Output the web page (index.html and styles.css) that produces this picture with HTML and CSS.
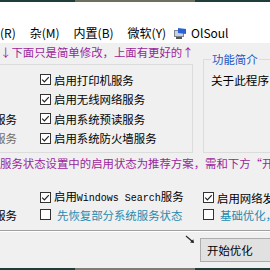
FILE: index.html
```html
<!DOCTYPE html>
<html lang="zh">
<head>
<meta charset="utf-8">
<link rel="stylesheet" href="styles.css">
</head>
<body>
<div class="win">
  <div class="strip"><span class="sa"></span><span class="sb"></span><span class="sc"></span></div>
  <div class="menubar">
    <span class="mi">(R)</span>
    <span class="mi">杂(M)</span>
    <span class="mi">内置(B)</span>
    <span class="mi">微软(Y)</span>
    <span class="mi brand">
      <svg class="micon" width="13" height="11" viewBox="0 0 13 11"><rect x="0" y="2" width="10" height="7" fill="#7d8590"/><rect x="1" y="3" width="8" height="5" fill="#c9d2de"/><polygon points="4,0 12,1 12,6 4,5" fill="#2a62d4"/><rect x="2" y="9" width="6" height="2" fill="#555"/></svg>
      <span>OlSoul</span>
    </span>
  </div>
  <div class="client">
    <div class="note">↓下面只是简单修改，上面有更好的↑</div>
    <div class="top">
      <div class="gbox">
        <div class="grid">
          <span class="cut"></span>
          <label class="opt"><svg class="cb" viewBox="0 0 11 11"><rect x=".5" y=".5" width="10" height="10" fill="#fff" stroke="#333"/><path d="M2.2 5.6 4.4 7.8 8.8 3.2" fill="none" stroke="#222" stroke-width="1.2"/></svg><span>启用打印机服务</span></label>
          <span class="cut"></span>
          <label class="opt"><svg class="cb" viewBox="0 0 11 11"><rect x=".5" y=".5" width="10" height="10" fill="#fff" stroke="#333"/><path d="M2.2 5.6 4.4 7.8 8.8 3.2" fill="none" stroke="#222" stroke-width="1.2"/></svg><span>启用无线网络服务</span></label>
          <span class="cut">系统服务</span>
          <label class="opt"><svg class="cb" viewBox="0 0 11 11"><rect x=".5" y=".5" width="10" height="10" fill="#fff" stroke="#333"/><path d="M2.2 5.6 4.4 7.8 8.8 3.2" fill="none" stroke="#222" stroke-width="1.2"/></svg><span>启用系统预读服务</span></label>
          <span class="cut dim">系统服务</span>
          <label class="opt"><svg class="cb" viewBox="0 0 11 11"><rect x=".5" y=".5" width="10" height="10" fill="#fff" stroke="#333"/><path d="M2.2 5.6 4.4 7.8 8.8 3.2" fill="none" stroke="#222" stroke-width="1.2"/></svg><span>启用系统防火墙服务</span></label>
        </div>
      </div>
      <fieldset class="info">
        <legend>功能简介</legend>
        <p>关于此程序</p>
      </fieldset>
    </div>
    <div class="note note2">服务状态设置中的启用状态为推荐方案，需和下方“开始优化”按钮配合使用</div>
    <div class="grid2">
      <span class="cut"></span>
      <label class="opt"><svg class="cb" viewBox="0 0 11 11"><rect x=".5" y=".5" width="10" height="10" fill="#fff" stroke="#333"/><path d="M2.2 5.6 4.4 7.8 8.8 3.2" fill="none" stroke="#222" stroke-width="1.2"/></svg><span>启用<span class="mono">Windows Search</span>服务</span></label>
      <label class="opt"><svg class="cb" viewBox="0 0 11 11"><rect x=".5" y=".5" width="10" height="10" fill="#fff" stroke="#333"/><path d="M2.2 5.6 4.4 7.8 8.8 3.2" fill="none" stroke="#222" stroke-width="1.2"/></svg><span>启用网络发现服务</span></label>
      <span class="cut">系统服务</span>
      <label class="opt teal"><svg class="cb" viewBox="0 0 11 11"><rect x=".5" y=".5" width="10" height="10" fill="#fff" stroke="#333"/></svg><span class="sp">先恢复部分系统服务状态</span></label>
      <label class="opt teal"><svg class="cb" viewBox="0 0 11 11"><rect x=".5" y=".5" width="10" height="10" fill="#fff" stroke="#333"/></svg><span class="sp">基础优化，推荐</span></label>
    </div>
    <div class="sep"></div>
    <div class="footer">
      <svg class="arrow" width="10" height="9" viewBox="0 0 10 9"><path d="M1 1 8 7" stroke="#222" stroke-width="1.1" fill="none"/><path d="M5 7.5 9 8 8.3 4.2" fill="#222"/></svg>
      <button class="btn">开始优化</button>
    </div>
  </div>
  <div class="strip"><span class="sa"></span><span class="sb light"></span><span class="sc"></span></div>
</div>
</body>
</html>
```

FILE: styles.css
```css
* { box-sizing: border-box; margin: 0; padding: 0; }
html, body { width: 270px; height: 270px; overflow: hidden; }
body {
  font-family: "Noto Sans CJK SC", "Microsoft YaHei", sans-serif;
  font-size: 11.4px;
  color: #000;
  background: #f0f0f0;
}
.win {
  width: 270px;
  height: 270px;
  overflow: hidden;
  display: flex;
  flex-direction: column;
}
.strip { height: 2px; display: flex; flex: none; }
.strip .sa { width: 75px; background: #1f3d3a; }
.strip .sb { width: 120px; background: #6e705e; }
.strip .sb.light { background: #7c7d74; }
.strip .sc { flex: 1; background: #1f3d3a; }

.menubar {
  flex: none;
  height: 41px;
  background: #fff;
  display: flex;
  align-items: flex-end;
  gap: 14px;
  padding-bottom: 3px;
  white-space: nowrap;
  line-height: 14px;
  font-size: 12px;
}
.mi { display: flex; align-items: center; }
.brand { gap: 4px; margin-left: -6px; }
.micon { display: block; }

.client {
  flex: 1;
  display: flex;
  flex-direction: column;
  min-height: 0;
  white-space: nowrap;
}
.note {
  color: #9c1f9c;
  line-height: 14px;
  padding-top: 2px;
}
.note2 { margin-top: 3px; padding-top: 0; }

.top {
  display: flex;
  align-items: flex-start;
  margin-top: -7px;
}
.gbox {
  flex: none;
  margin-left: -40px;
  margin-top: 12px;
  width: 233px;
  height: 89px;
  border: 1px solid #dcdcdc;
  padding: 5px 0 4px;
}
.grid {
  display: grid;
  grid-template-columns: 56px auto;
  grid-auto-rows: 19.5px;
  column-gap: 23px;
  align-items: center;
}
.cut { text-align: right; line-height: 14px; overflow: hidden; }
.dim { color: #6d6d6d; }
.opt {
  display: flex;
  align-items: center;
  gap: 3px;
  line-height: 14px;
}
.cb { width: 11px; height: 11px; flex: none; display: block; }
.mono { font-family: "Liberation Mono", monospace; font-size: 10px; }
.teal { color: #1c8bb0; }
.sp { margin-left: 3px; }

.info {
  flex: none;
  margin-left: 10px;
  width: 100px;
  height: 101px;
  border: 1px solid #dcdcdc;
  padding: 0 0 0 7px;
}
.info legend {
  color: #1b56c8;
  line-height: 14px;
  padding: 0 1px;
}
.info p { margin-top: 7px; line-height: 14px; font-size: 11.6px; }

.grid2 {
  display: grid;
  grid-template-columns: 56px 140px auto;
  grid-auto-rows: 17px;
  column-gap: 23px;
  align-items: center;
  margin-left: -39px;
  margin-top: 19px;
}

.sep {
  margin-top: 7px;
  border-top: 1px solid #a0a0a0;
  border-bottom: 1px solid #fff;
  height: 2px;
}
.footer {
  display: flex;
  align-items: flex-start;
  padding-left: 185px;
}
.arrow { display: block; margin-top: 3px; flex: none; }
.btn {
  flex: none;
  margin-left: 5px;
  margin-top: 6px;
  width: 80px;
  height: 24px;
  border: 1px solid #adadad;
  background: #e1e1e1;
  font: inherit;
  line-height: 14px;
  text-align: left;
  padding-left: 6px;
  color: #000;
}
```
